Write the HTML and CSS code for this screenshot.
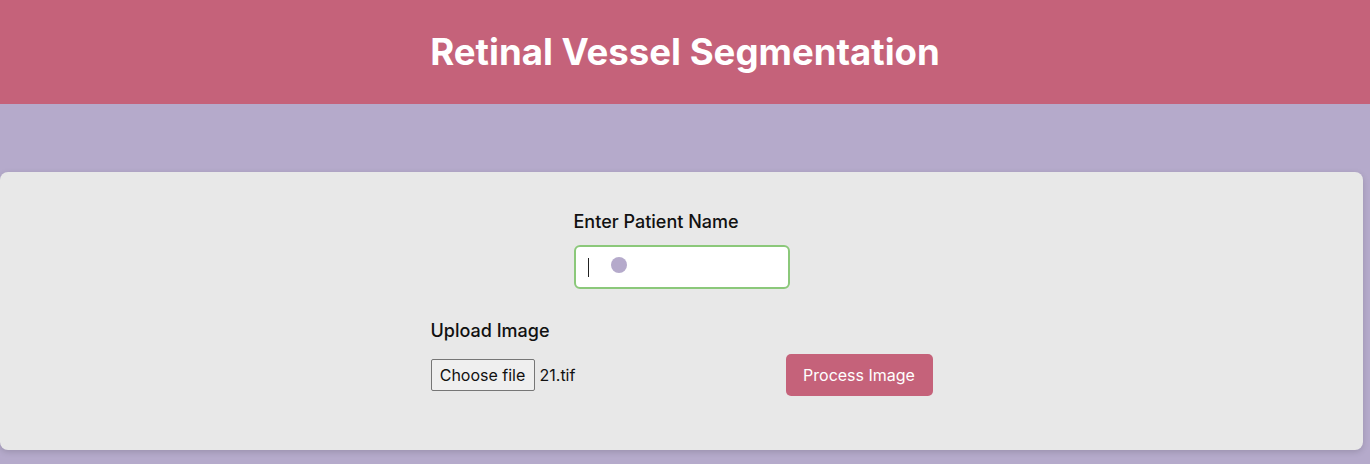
FILE: index.html
```html
<!DOCTYPE html>
<html>
<head>
<meta charset="utf-8">
<link rel="stylesheet" href="styles.css">
</head>
<body>
<header class="header">
  <h1 class="title">Retinal Vessel Segmentation</h1>
</header>
<main class="main">
  <section class="card">
    <div class="field name-field">
      <label class="label" for="pname">Enter Patient Name</label>
      <div class="input-wrap">
        <input class="input" id="pname" type="text">
        <span class="caret"></span>
        <span class="pointer"></span>
      </div>
    </div>
    <div class="field upload-field">
      <div class="label">Upload Image</div>
      <div class="upload-row">
        <div class="file">
          <span class="file-btn">Choose file</span>
          <span class="file-name">21.tif</span>
        </div>
        <button class="process">Process Image</button>
      </div>
    </div>
  </section>
</main>
</body>
</html>
```
FILE: styles.css
```css
* { box-sizing: border-box; }
html, body { margin: 0; padding: 0; }
body {
  background: #b5aacb;
  font-family: Inter, "Noto Sans", sans-serif;
  height: 464px;
  overflow: hidden;
}
.header {
  background: #c5627a;
  height: 104px;
  display: flex;
  align-items: center;
  justify-content: center;
}
.title {
  margin: 0;
  color: #fff;
  font-size: 36.6px;
  font-weight: 700;
  letter-spacing: 0;
}
.main {
  padding-top: 68px;
  width: 1363px;
}
.card {
  background: #e8e8e8;
  border-radius: 8px;
  box-shadow: 0 2px 6px rgba(0,0,0,0.15);
  height: 278px;
  padding-top: 38px;
  display: flex;
  flex-direction: column;
  align-items: center;
}
.field { display: flex; flex-direction: column; }
.name-field { width: 216px; }
.label {
  font-size: 18px;
  font-weight: 500;
  color: #111;
  line-height: 24px;
}
.input-wrap { position: relative; margin-top: 11px; }
.input {
  display: block;
  width: 216px;
  height: 44px;
  border: 2px solid #8bc87a;
  border-radius: 6px;
  background: #fff;
  outline: none;
  font: inherit;
}
.caret {
  position: absolute;
  left: 14px;
  top: 13px;
  width: 1px;
  height: 19px;
  background: #222;
}
.pointer {
  position: absolute;
  left: 37px;
  top: 12px;
  width: 16px;
  height: 16px;
  border-radius: 50%;
  background: #b5aacb;
}
.upload-field { width: 502px; margin-top: 30px; }
.upload-row {
  display: flex;
  justify-content: space-between;
  align-items: center;
  margin-top: 11px;
}
.file { display: flex; align-items: center; gap: 5px; font-size: 16px; color: #111; }
.file-btn {
  display: inline-block;
  border: 1px solid #767676;
  border-radius: 2px;
  background: #efefef;
  padding: 0 8px;
  width: 104px;
  height: 32px;
  line-height: 30px;
  font-size: 16px;
  text-align: center;
}
.process {
  background: #c5627a;
  color: #fff;
  border: none;
  border-radius: 5px;
  width: 147px;
  height: 42px;
  font: inherit;
  font-size: 16px;
}
```
